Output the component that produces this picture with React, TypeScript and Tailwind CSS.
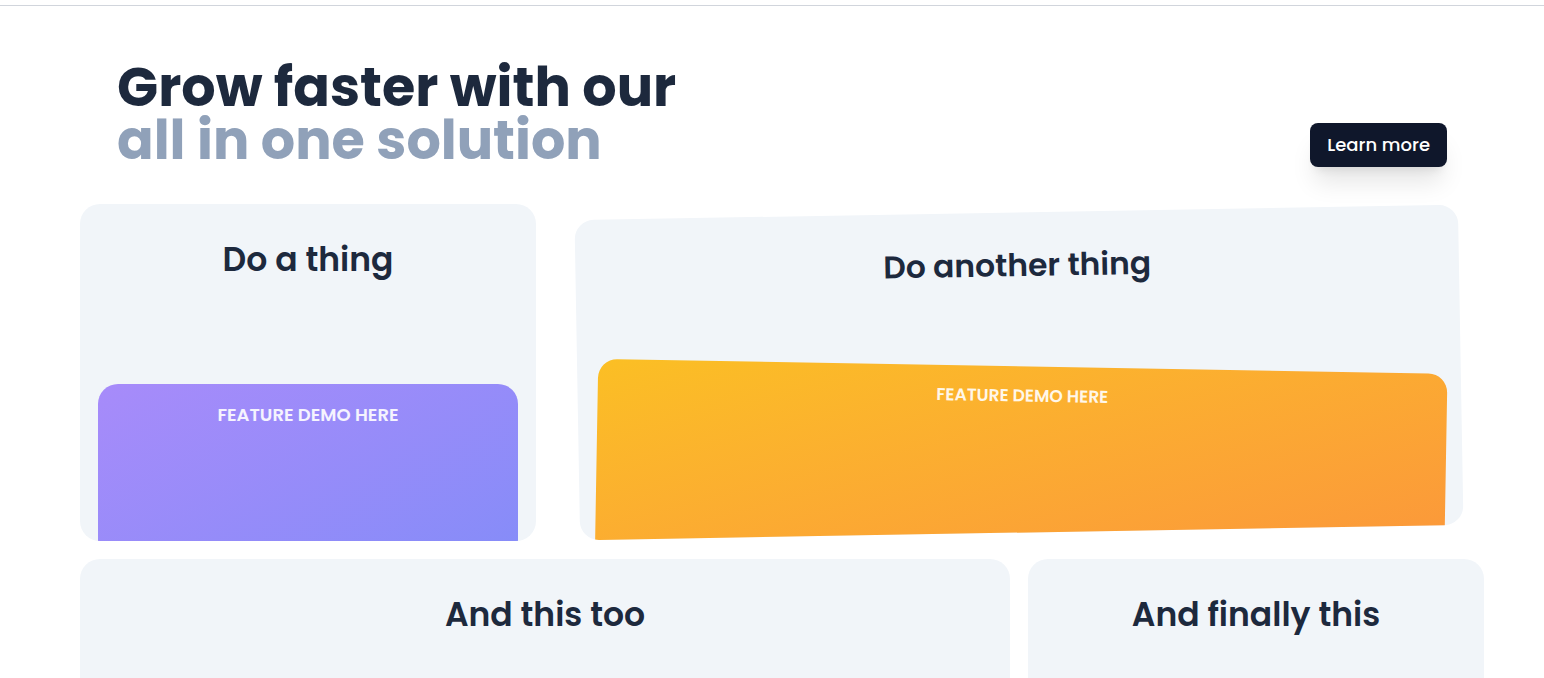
import React from "react";

type FeatureCardProps = {
  title: string;
  demo?: "violet" | "amber";
  tilted?: boolean;
};

const FeatureCard: React.FC<FeatureCardProps> = ({ title, demo, tilted }) => {
  return (
    <div
      className={
        tilted
          ? "h-[337px] overflow-hidden rounded-[20px] bg-slate-100 px-[18px] pt-9 scale-95 -rotate-1"
          : "h-[337px] overflow-hidden rounded-[20px] bg-slate-100 px-[18px] pt-9"
      }
    >
      <h3 className="text-center text-[33px] leading-10 font-semibold text-slate-800">
        {title}
      </h3>

      {/* Demo placeholder, only for the first row */}
      {demo === "violet" && (
        <div className="mt-[104px] h-[220px] rounded-t-[20px] bg-linear-to-br from-[#a78bfa] to-[#818cf8] pt-[17px] text-center text-lg font-semibold text-white/90">
          FEATURE DEMO HERE
        </div>
      )}
      {demo === "amber" && (
        <div className="mt-[86px] h-[240px] rounded-t-[20px] bg-linear-to-br from-[#fbbf24] to-[#fb923c] pt-[17px] text-center text-lg font-semibold text-white/90 rotate-2">
          FEATURE DEMO HERE
        </div>
      )}
    </div>
  );
};

export default function App() {
  return (
    <div
      className="min-h-screen bg-white"
      style={{ fontFamily: "Poppins, Inter, 'Noto Sans', sans-serif" }}
    >
      <div className="mt-[5px] border-t border-gray-300" />

      <main className="pl-[80px] pr-[60px] pt-[55px]">
        {/* Header */}
        <div className="flex items-end justify-between px-[37px]">
          <h1 className="text-[54px] leading-[53px] font-bold">
            <span className="block text-slate-800">Grow faster with our</span>
            <span className="block text-slate-400">all in one solution</span>
          </h1>
          <button className="rounded-lg bg-slate-900 px-[17px] py-[8px] text-lg font-medium text-white shadow-xl">
            Learn more
          </button>
        </div>

        {/* Feature grid */}
        <div className="mt-[37px] grid grid-cols-3 gap-[18px]">
          <FeatureCard title="Do a thing" demo="violet" />
          <div className="col-span-2">
            <FeatureCard title="Do another thing" demo="amber" tilted />
          </div>
          <div className="col-span-2">
            <FeatureCard title="And this too" />
          </div>
          <FeatureCard title="And finally this" />
        </div>
      </main>
    </div>
  );
}
